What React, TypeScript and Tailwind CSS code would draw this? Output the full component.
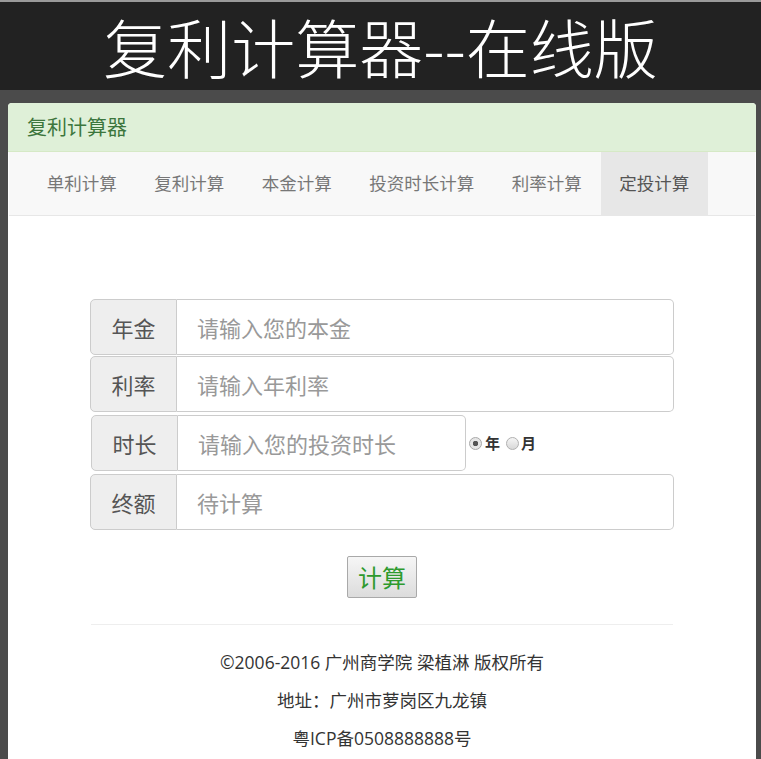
import React from "react";

const cjk = { fontFamily: '"Noto Sans CJK SC", "Noto Sans", sans-serif' };
const footer = { fontFamily: '"Open Sans", "Noto Sans CJK SC", sans-serif' };

function Row({ label, placeholder, className }: { label: string; placeholder: string; className: string }) {
  return (
    <div className={"flex h-[56px] " + className}>
      <div className="flex w-[87px] shrink-0 items-center justify-center rounded-l-[5px] border border-[#cccccc] bg-[#eeeeee] text-[22px] text-[#555555]">
        {label}
      </div>
      <div className="flex flex-1 items-center rounded-r-[5px] border border-l-0 border-[#cccccc] bg-white pl-[20px] text-[22px] text-[#999999]">
        {placeholder}
      </div>
    </div>
  );
}

export default function App() {
  return (
    <div className="min-h-[759px] bg-[#4b4b4b]" style={cjk}>
      <div className="flex h-[90px] items-center justify-center border-t-2 border-[#9a9a9a] bg-[#222222] pb-[2px]">
        <span className="text-[64px] font-light leading-none text-white">复利计算器--在线版</span>
      </div>
      <div className="ml-[8px] mr-[5px] mt-[13px] flex min-h-[656px] flex-col rounded-t-[4px] bg-white">
        <div className="flex h-[49px] items-center rounded-t-[4px] border-b border-[#d6e9c6] bg-[#dff0d8] pl-[19px] text-[20px] text-[#3c763d]">
          复利计算器
        </div>
        <div className="mx-[1px] flex h-[64px] border-b border-[#e7e7e7] bg-[#f8f8f8] pl-[19px] text-[17.5px] text-[#777777]">
          {["单利计算", "复利计算", "本金计算", "投资时长计算", "利率计算", "定投计算"].map((t, i) => (
            <div
              key={t}
              className={
                "flex items-center px-[18.75px] " + (i === 5 ? "bg-[#e7e7e7] text-[#555555]" : "")
              }
            >
              {t}
            </div>
          ))}
        </div>
        <div className="flex flex-col items-center pt-[83px]">
          <div className="flex w-[584px] flex-col">
            <Row label="年金" placeholder="请输入您的本金" className="" />
            <Row label="利率" placeholder="请输入年利率" className="mt-[1px]" />
            <div className="mt-[3px] flex items-center">
              <Row label="时长" placeholder="请输入您的投资时长" className="ml-[1px] w-[375px]" />
              <div className="ml-[3px] flex items-center text-[15px] font-bold text-[#333333]">
                <span className="inline-block h-[13px] w-[13px] rounded-full border border-[#a8a8a8] bg-[radial-gradient(circle,#555_0,#555_2.5px,#e6e6e6_3px)]" />
                <span className="ml-[3px]">年</span>
                <span className="ml-[6px] inline-block h-[13px] w-[13px] rounded-full border border-[#b0b0b0] bg-[linear-gradient(#f5f5f5,#d8d8d8)]" />
                <span className="ml-[2px]">月</span>
              </div>
            </div>
            <Row label="终额" placeholder="待计算" className="mt-[3px]" />
          </div>
          <button className="mt-[26px] flex h-[42px] w-[70px] items-center justify-center rounded-[2px] border border-[#a9a9a9] bg-[linear-gradient(#f6f6f6,#dcdcdc)] text-[24px] text-[#2e9a2e]">
            计算
          </button>
          <div className="mt-[26px] h-px w-[582px] bg-[#eeeeee]" />
          <div
            className="mt-[18px] flex flex-col items-center text-[17.5px] leading-[38px] text-[#333333]"
            style={footer}
          >
            <div>©2006-2016 广州商学院 梁植淋 版权所有</div>
            <div>地址：广州市萝岗区九龙镇</div>
            <div>粤ICP备0508888888号</div>
          </div>
        </div>
      </div>
    </div>
  );
}
